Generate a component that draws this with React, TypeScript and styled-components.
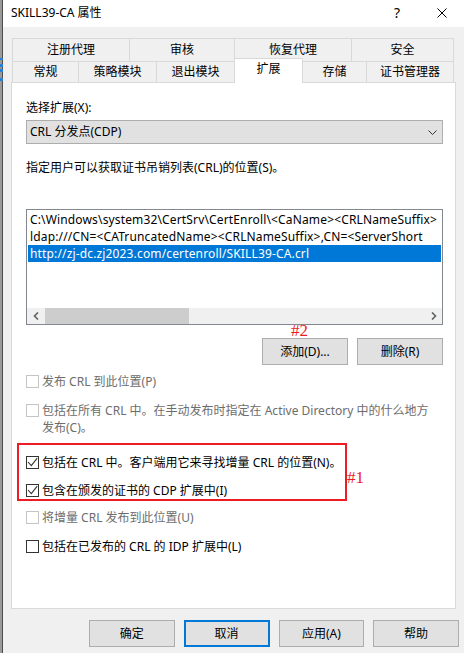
import React from "react";
import styled, { createGlobalStyle, css } from "styled-components";

const GlobalStyle = createGlobalStyle`
  html, body { margin: 0; padding: 0; background: #f0f0f0; }
  body {
    font-family: "Noto Sans", "Noto Sans CJK SC", sans-serif;
    font-size: 12px;
    color: #000;
  }
  * { box-sizing: border-box; }
`;

const Screen = styled.div`
  width: 464px;
  height: 653px;
  display: flex;
  overflow: hidden;
`;

const LeftEdge = styled.div`
  width: 3px;
  flex-shrink: 0;
  background:
    linear-gradient(
      to bottom,
      transparent 0 58px,
      #2a7fd4 58px 60px,
      transparent 60px 64px,
      #2a7fd4 64px 67px,
      transparent 67px 69px,
      #2a7fd4 69px 72px,
      transparent 72px 78px,
      #2a7fd4 78px 81px,
      transparent 81px
    ),
    linear-gradient(to right, #9a9a9a 0 2px, #4d4d4d 2px 3px);
`;

const Window = styled.div`
  flex: 1;
  min-width: 0;
  display: flex;
  flex-direction: column;
  background: #f0f0f0;
`;

const TitleBar = styled.div`
  height: 27px;
  flex-shrink: 0;
  background: #fff;
  display: flex;
  align-items: center;
  padding: 0 0 2px 8px;
`;

const Title = styled.span`
  flex: 1;
  font-size: 12px;
  line-height: 16px;
`;

const TitleButton = styled.div<{ $w: number }>`
  width: ${(p) => p.$w}px;
  height: 24px;
  display: flex;
  align-items: center;
  justify-content: center;
  font-size: 14px;
`;

const Body = styled.div`
  flex: 1;
  min-width: 0;
  display: flex;
  flex-direction: column;
  padding: 11px 8px 6px 8px;
`;

const TabStrip = styled.div`
  display: flex;
  flex-direction: column;
  margin: 0 2px 0 1px;
`;

const TabRow = styled.div<{ $h: number }>`
  display: flex;
  align-items: flex-end;
  height: ${(p) => p.$h}px;
`;

const Tab = styled.div<{ $w: number; $first?: boolean; $selected?: boolean; $pb: number }>`
  width: ${(p) => p.$w}px;
  height: 100%;
  margin-left: ${(p) => (p.$first ? 0 : -1)}px;
  border: 1px solid #d9d9d9;
  border-bottom: none;
  background: #f0f0f0;
  display: flex;
  align-items: center;
  justify-content: center;
  line-height: 16px;
  padding-bottom: ${(p) => p.$pb}px;
  white-space: nowrap;
  ${(p) =>
    p.$selected &&
    css`
      height: 25px;
      margin-bottom: -1px;
      background: #fff;
      position: relative;
      z-index: 1;
      padding-bottom: 4px;
    `}
`;

const Panel = styled.div`
  flex: 1;
  min-width: 0;
  background: #fff;
  border: 1px solid #d9d9d9;
  display: flex;
  flex-direction: column;
  padding: 17px 12px 0 14px;
`;

const FieldLabel = styled.div`
  line-height: 16px;
`;

const Combo = styled.div`
  margin-top: 4px;
  height: 24px;
  border: 1px solid #adadad;
  background: #e1e1e1;
  display: flex;
  align-items: center;
  justify-content: space-between;
  padding: 0 5px 0 3px;
  line-height: 16px;
`;

const Description = styled.div`
  margin-top: 16px;
  line-height: 16px;
`;

const ListBox = styled.div`
  margin-top: 33px;
  height: 116px;
  min-width: 0;
  border: 1px solid #828790;
  display: flex;
  flex-direction: column;
  padding-top: 1px;
  overflow: hidden;
`;

const ListRow = styled.div<{ $selected?: boolean }>`
  height: 17px;
  line-height: 17px;
  margin: 0 1px;
  padding-left: 2px;
  white-space: nowrap;
  overflow: hidden;
  letter-spacing: 0.15px;
  ${(p) =>
    p.$selected &&
    css`
      background: #0078d7;
      color: #fff;
    `}
`;

const HScroll = styled.div`
  margin-top: auto;
  height: 16px;
  display: flex;
  background: #f0f0f0;
`;

const ScrollArrow = styled.div`
  width: 17px;
  display: flex;
  align-items: center;
  justify-content: center;
`;

const Track = styled.div`
  flex: 1;
  display: flex;
  padding-left: 1px;
`;

const Thumb = styled.div`
  width: 144px;
  background: #cdcdcd;
`;

const ActionRow = styled.div`
  margin-top: 13px;
  display: flex;
  justify-content: flex-end;
  gap: 9px;
`;

const Button = styled.button<{ $default?: boolean }>`
  position: relative;
  width: 86px;
  height: 27px;
  padding: 0;
  border: 1px solid #adadad;
  background: #e1e1e1;
  font-family: inherit;
  font-size: 12px;
  color: #000;
  line-height: 16px;
  ${(p) =>
    p.$default &&
    css`
      border: 2px solid #0078d7;
    `}
`;

const CheckRow = styled.div<{ $mt: number; $disabled?: boolean; $lh?: number }>`
  margin-top: ${(p) => p.$mt}px;
  display: flex;
  align-items: flex-start;
  gap: 3px;
  line-height: ${(p) => p.$lh ?? 16}px;
  color: ${(p) => (p.$disabled ? "#6d6d6d" : "#000")};
  white-space: nowrap;
`;

const Box = styled.span<{ $disabled?: boolean }>`
  width: 13px;
  height: 13px;
  flex-shrink: 0;
  margin-top: 1px;
  border: 1px solid ${(p) => (p.$disabled ? "#c4c4c4" : "#333")};
  background: #fff;
  display: flex;
`;

const CheckLabel = styled.span`
  display: flex;
  flex-direction: column;
`;

const Annotated = styled.div`
  position: relative;
  margin-top: 7px;
  margin-left: -9px;
  width: 330px;
  border: 2px solid #ed1c24;
  padding: 10px 0 0 7px;
  display: flex;
  flex-direction: column;
  gap: 12px;
`;

const Mark = styled.span<{ $left: string; $top: number }>`
  position: absolute;
  left: ${(p) => p.$left};
  top: ${(p) => p.$top}px;
  font-family: "Liberation Serif", "DejaVu Serif", serif;
  font-size: 17px;
  line-height: 17px;
  color: #ed1c24;
  white-space: nowrap;
`;

const FooterRow = styled.div`
  margin-top: 11px;
  margin-right: -3px;
  padding-left: 78px;
  display: flex;
  gap: 9px;
`;

const CheckMark = () => (
  <svg width="11" height="11" viewBox="0 0 11 11">
    <path d="M1 5 L4.3 8.6 L10.2 1.2" fill="none" stroke="#333" strokeWidth="1.1" />
  </svg>
);

type CheckProps = {
  checked?: boolean;
  disabled?: boolean;
  mt: number;
  lh?: number;
  lines: string[];
};

const Check = ({ checked, disabled, mt, lh, lines }: CheckProps) => (
  <CheckRow $mt={mt} $disabled={disabled} $lh={lh}>
    <Box $disabled={disabled} style={lh ? { marginTop: (lh - 13) / 2 } : undefined}>
      {checked && <CheckMark />}
    </Box>
    <CheckLabel>
      {lines.map((l) => (
        <span key={l}>{l}</span>
      ))}
    </CheckLabel>
  </CheckRow>
);

const row1 = [
  { label: "注册代理", w: 118 },
  { label: "审核", w: 106 },
  { label: "恢复代理", w: 118 },
  { label: "安全", w: 103 },
];

const row2 = [
  { label: "常规", w: 67 },
  { label: "策略模块", w: 79 },
  { label: "退出模块", w: 79 },
  { label: "扩展", w: 69, selected: true },
  { label: "存储", w: 65 },
  { label: "证书管理器", w: 88 },
];

const listItems = [
  "C:\\Windows\\system32\\CertSrv\\CertEnroll\\<CaName><CRLNameSuffix>",
  "ldap:///CN=<CATruncatedName><CRLNameSuffix>,CN=<ServerShort",
  "http://zj-dc.zj2023.com/certenroll/SKILL39-CA.crl",
];

export default function App() {
  return (
    <>
      <GlobalStyle />
      <Screen>
        <LeftEdge />
        <Window>
          <TitleBar>
            <Title>SKILL39-CA 属性</Title>
            <TitleButton $w={46}>?</TitleButton>
            <TitleButton $w={44}>
              <svg width="10" height="10" viewBox="0 0 10 10">
                <path d="M0.5 0.5 L9.5 9.5 M9.5 0.5 L0.5 9.5" stroke="#000" strokeWidth="1" />
              </svg>
            </TitleButton>
          </TitleBar>
          <Body>
            <TabStrip>
              <TabRow $h={23}>
                {row1.map((t, i) => (
                  <Tab key={t.label} $w={t.w} $first={i === 0} $pb={1}>
                    {t.label}
                  </Tab>
                ))}
              </TabRow>
              <TabRow $h={21}>
                {row2.map((t, i) => (
                  <Tab key={t.label} $w={t.w} $first={i === 0} $selected={t.selected} $pb={1}>
                    {t.label}
                  </Tab>
                ))}
              </TabRow>
            </TabStrip>
            <Panel>
              <FieldLabel>选择扩展(X):</FieldLabel>
              <Combo>
                <span>CRL 分发点(CDP)</span>
                <svg width="9" height="5" viewBox="0 0 9 5">
                  <path d="M0.5 0.5 L4.5 4.5 L8.5 0.5" fill="none" stroke="#333" strokeWidth="1" />
                </svg>
              </Combo>
              <Description>指定用户可以获取证书吊销列表(CRL)的位置(S)。</Description>
              <ListBox>
                {listItems.map((item, i) => (
                  <ListRow key={item} $selected={i === 2}>
                    {item}
                  </ListRow>
                ))}
                <HScroll>
                  <ScrollArrow>
                    <svg width="6" height="8" viewBox="0 0 6 8">
                      <path d="M5 0.5 L1.5 4 L5 7.5" fill="none" stroke="#606060" strokeWidth="1.6" />
                    </svg>
                  </ScrollArrow>
                  <Track>
                    <Thumb />
                  </Track>
                  <ScrollArrow>
                    <svg width="6" height="8" viewBox="0 0 6 8">
                      <path d="M1 0.5 L4.5 4 L1 7.5" fill="none" stroke="#606060" strokeWidth="1.6" />
                    </svg>
                  </ScrollArrow>
                </HScroll>
              </ListBox>
              <ActionRow>
                <Button>
                  添加(D)...
                  <Mark $left="28px" $top={-17}>
                    #2
                  </Mark>
                </Button>
                <Button>删除(R)</Button>
              </ActionRow>
              <Check mt={9} disabled lines={["发布 CRL 到此位置(P)"]} />
              <Check
                mt={12}
                disabled
                lh={17}
                lines={["包括在所有 CRL 中。在手动发布时指定在 Active Directory 中的什么地方", "发布(C)。"]}
              />
              <Annotated>
                <Check mt={0} checked lines={["包括在 CRL 中。客户端用它来寻找增量 CRL 的位置(N)。"]} />
                <Check mt={0} checked lines={["包含在颁发的证书的 CDP 扩展中(I)"]} />
                <Mark $left="calc(100% + 2px)" $top={24}>
                  #1
                </Mark>
              </Annotated>
              <Check mt={9} disabled lines={["将增量 CRL 发布到此位置(U)"]} />
              <Check mt={13} lines={["包括在已发布的 CRL 的 IDP 扩展中(L)"]} />
            </Panel>
            <FooterRow>
              <Button>确定</Button>
              <Button $default>取消</Button>
              <Button>应用(A)</Button>
              <Button>帮助</Button>
            </FooterRow>
          </Body>
        </Window>
      </Screen>
    </>
  );
}
